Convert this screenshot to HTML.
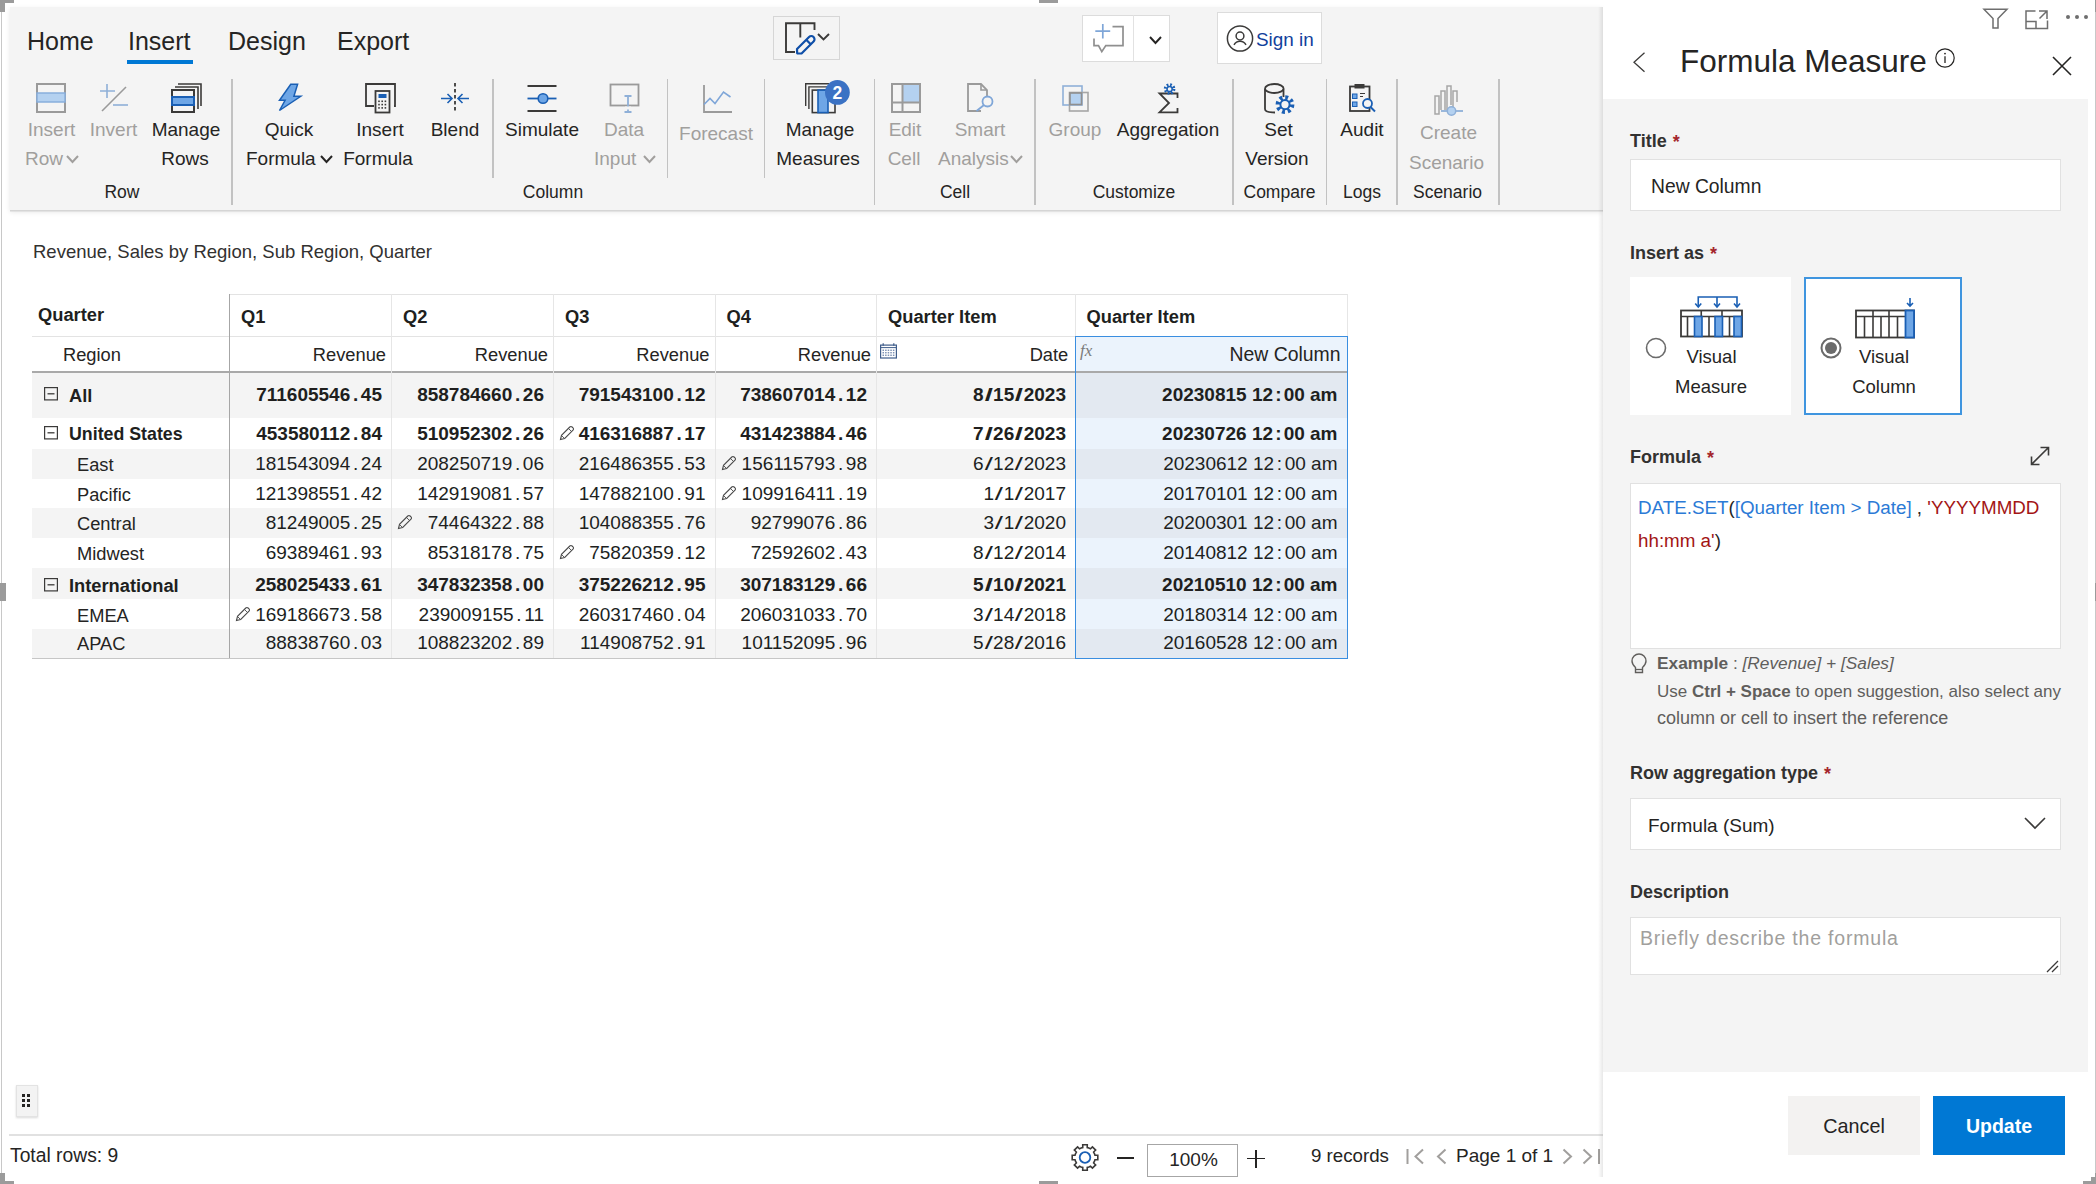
<!DOCTYPE html>
<html><head><meta charset="utf-8"><title>Formula Measure</title>
<style>
html,body{margin:0;padding:0;width:2096px;height:1184px;overflow:hidden;background:#fff;}
body{position:relative;font-family:"Liberation Sans",sans-serif;color:#252423;}
.t{position:absolute;white-space:pre;}
svg{position:absolute;}
</style></head><body>

<div style="position:absolute;left:1.00px;top:0.00px;width:1.00px;height:1184.00px;background:#c8c8c8;"></div>
<div style="position:absolute;left:2094.50px;top:0.00px;width:1.00px;height:1184.00px;background:#c8c8c8;"></div>
<div style="position:absolute;left:0.00px;top:0.00px;width:14.00px;height:3.00px;background:#9b9b9b;"></div>
<div style="position:absolute;left:0.00px;top:0.00px;width:5.00px;height:12.00px;background:#9b9b9b;"></div>
<div style="position:absolute;left:1039.00px;top:0.00px;width:19.00px;height:3.00px;background:#9b9b9b;"></div>
<div style="position:absolute;left:2094.50px;top:0.00px;width:1.50px;height:12.00px;background:#9b9b9b;"></div>
<div style="position:absolute;left:0.00px;top:583.00px;width:5.50px;height:18.00px;background:#9b9b9b;"></div>
<div style="position:absolute;left:2090.50px;top:583.00px;width:5.50px;height:18.00px;background:#9b9b9b;"></div>
<div style="position:absolute;left:0.00px;top:1173.00px;width:5.00px;height:11.00px;background:#9b9b9b;"></div>
<div style="position:absolute;left:0.00px;top:1181.00px;width:14.00px;height:3.00px;background:#9b9b9b;"></div>
<div style="position:absolute;left:1039.00px;top:1181.00px;width:19.00px;height:3.00px;background:#9b9b9b;"></div>
<div style="position:absolute;left:2091.00px;top:1173.00px;width:5.00px;height:11.00px;background:#9b9b9b;"></div>
<div style="position:absolute;left:2083.00px;top:1181.00px;width:13.00px;height:3.00px;background:#9b9b9b;"></div>
<div style="position:absolute;left:10.00px;top:7.00px;width:1593.00px;height:203.00px;background:#f4f4f4;box-shadow:0 1.5px 0 #d5d5d5, 0 2px 5px rgba(0,0,0,0.10);"></div>
<div class="t" style="top:26.96px;font-size:25.00px;line-height:28.75px;color:#252423;left:27.00px;">Home</div>
<div class="t" style="top:26.96px;font-size:25.00px;line-height:28.75px;color:#252423;left:128.00px;">Insert</div>
<div class="t" style="top:26.96px;font-size:25.00px;line-height:28.75px;color:#252423;left:228.00px;">Design</div>
<div class="t" style="top:26.96px;font-size:25.00px;line-height:28.75px;color:#252423;left:337.00px;">Export</div>
<div style="position:absolute;left:127.00px;top:60.00px;width:66.00px;height:4.00px;background:#0078d4;"></div>
<div class="t" style="top:119.49px;font-size:19.00px;line-height:21.85px;color:#a19f9d;left:-448.50px;width:1000px;text-align:center;">Insert</div>
<div class="t" style="top:148.49px;font-size:19.00px;line-height:21.85px;color:#a19f9d;left:25.00px;">Row</div>
<svg style="position:absolute;left:66.00px;top:155.00px;overflow:visible" width="13" height="8" viewBox="0 0 13 8" fill="none"><polyline points="1,1 6.5,7 12,1" stroke="#a19f9d" stroke-width="2" fill="none"/></svg>
<div class="t" style="top:119.49px;font-size:19.00px;line-height:21.85px;color:#a19f9d;left:-386.50px;width:1000px;text-align:center;">Invert</div>
<div class="t" style="top:119.49px;font-size:19.00px;line-height:21.85px;color:#252423;left:-314.00px;width:1000px;text-align:center;">Manage</div>
<div class="t" style="top:148.49px;font-size:19.00px;line-height:21.85px;color:#252423;left:-315.00px;width:1000px;text-align:center;">Rows</div>
<div class="t" style="top:181.87px;font-size:17.50px;line-height:20.12px;color:#252423;left:-378.00px;width:1000px;text-align:center;">Row</div>
<div class="t" style="top:119.49px;font-size:19.00px;line-height:21.85px;color:#252423;left:-211.00px;width:1000px;text-align:center;">Quick</div>
<div class="t" style="top:148.49px;font-size:19.00px;line-height:21.85px;color:#252423;left:246.00px;">Formula</div>
<svg style="position:absolute;left:320.00px;top:155.00px;overflow:visible" width="13" height="8" viewBox="0 0 13 8" fill="none"><polyline points="1,1 6.5,7 12,1" stroke="#252423" stroke-width="2" fill="none"/></svg>
<div class="t" style="top:119.49px;font-size:19.00px;line-height:21.85px;color:#252423;left:-120.00px;width:1000px;text-align:center;">Insert</div>
<div class="t" style="top:148.49px;font-size:19.00px;line-height:21.85px;color:#252423;left:-122.00px;width:1000px;text-align:center;">Formula</div>
<div class="t" style="top:119.49px;font-size:19.00px;line-height:21.85px;color:#252423;left:-45.00px;width:1000px;text-align:center;">Blend</div>
<div class="t" style="top:119.49px;font-size:19.00px;line-height:21.85px;color:#252423;left:42.00px;width:1000px;text-align:center;">Simulate</div>
<div class="t" style="top:119.49px;font-size:19.00px;line-height:21.85px;color:#a19f9d;left:124.00px;width:1000px;text-align:center;">Data</div>
<div class="t" style="top:148.49px;font-size:19.00px;line-height:21.85px;color:#a19f9d;left:594.00px;">Input</div>
<svg style="position:absolute;left:643.00px;top:155.00px;overflow:visible" width="13" height="8" viewBox="0 0 13 8" fill="none"><polyline points="1,1 6.5,7 12,1" stroke="#a19f9d" stroke-width="2" fill="none"/></svg>
<div class="t" style="top:181.87px;font-size:17.50px;line-height:20.12px;color:#252423;left:53.00px;width:1000px;text-align:center;">Column</div>
<div class="t" style="top:122.99px;font-size:19.00px;line-height:21.85px;color:#a19f9d;left:216.00px;width:1000px;text-align:center;">Forecast</div>
<div class="t" style="top:119.49px;font-size:19.00px;line-height:21.85px;color:#252423;left:320.00px;width:1000px;text-align:center;">Manage</div>
<div class="t" style="top:148.49px;font-size:19.00px;line-height:21.85px;color:#252423;left:318.00px;width:1000px;text-align:center;">Measures</div>
<div class="t" style="top:119.49px;font-size:19.00px;line-height:21.85px;color:#a19f9d;left:405.00px;width:1000px;text-align:center;">Edit</div>
<div class="t" style="top:148.49px;font-size:19.00px;line-height:21.85px;color:#a19f9d;left:404.00px;width:1000px;text-align:center;">Cell</div>
<div class="t" style="top:119.49px;font-size:19.00px;line-height:21.85px;color:#a19f9d;left:480.00px;width:1000px;text-align:center;">Smart</div>
<div class="t" style="top:148.49px;font-size:19.00px;line-height:21.85px;color:#a19f9d;left:938.00px;">Analysis</div>
<svg style="position:absolute;left:1010.00px;top:155.00px;overflow:visible" width="13" height="8" viewBox="0 0 13 8" fill="none"><polyline points="1,1 6.5,7 12,1" stroke="#a19f9d" stroke-width="2" fill="none"/></svg>
<div class="t" style="top:181.87px;font-size:17.50px;line-height:20.12px;color:#252423;left:455.00px;width:1000px;text-align:center;">Cell</div>
<div class="t" style="top:119.49px;font-size:19.00px;line-height:21.85px;color:#a19f9d;left:575.00px;width:1000px;text-align:center;">Group</div>
<div class="t" style="top:119.49px;font-size:19.00px;line-height:21.85px;color:#252423;left:668.00px;width:1000px;text-align:center;">Aggregation</div>
<div class="t" style="top:181.87px;font-size:17.50px;line-height:20.12px;color:#252423;left:634.00px;width:1000px;text-align:center;">Customize</div>
<div class="t" style="top:119.49px;font-size:19.00px;line-height:21.85px;color:#252423;left:778.50px;width:1000px;text-align:center;">Set</div>
<div class="t" style="top:148.49px;font-size:19.00px;line-height:21.85px;color:#252423;left:777.00px;width:1000px;text-align:center;">Version</div>
<div class="t" style="top:181.87px;font-size:17.50px;line-height:20.12px;color:#252423;left:779.50px;width:1000px;text-align:center;">Compare</div>
<div class="t" style="top:119.49px;font-size:19.00px;line-height:21.85px;color:#252423;left:862.00px;width:1000px;text-align:center;">Audit</div>
<div class="t" style="top:181.87px;font-size:17.50px;line-height:20.12px;color:#252423;left:862.00px;width:1000px;text-align:center;">Logs</div>
<div class="t" style="top:122.49px;font-size:19.00px;line-height:21.85px;color:#a19f9d;left:948.50px;width:1000px;text-align:center;">Create</div>
<div class="t" style="top:152.49px;font-size:19.00px;line-height:21.85px;color:#a19f9d;left:946.50px;width:1000px;text-align:center;">Scenario</div>
<div class="t" style="top:181.87px;font-size:17.50px;line-height:20.12px;color:#252423;left:947.50px;width:1000px;text-align:center;">Scenario</div>
<div style="position:absolute;left:231.25px;top:79.00px;width:1.50px;height:126.00px;background:#c2c2c2;"></div>
<div style="position:absolute;left:492.25px;top:79.00px;width:1.50px;height:99.00px;background:#c2c2c2;"></div>
<div style="position:absolute;left:666.75px;top:79.00px;width:1.50px;height:99.00px;background:#c2c2c2;"></div>
<div style="position:absolute;left:763.75px;top:79.00px;width:1.50px;height:99.00px;background:#c2c2c2;"></div>
<div style="position:absolute;left:873.75px;top:79.00px;width:1.50px;height:126.00px;background:#c2c2c2;"></div>
<div style="position:absolute;left:1034.25px;top:79.00px;width:1.50px;height:126.00px;background:#c2c2c2;"></div>
<div style="position:absolute;left:1232.25px;top:79.00px;width:1.50px;height:126.00px;background:#c2c2c2;"></div>
<div style="position:absolute;left:1325.75px;top:79.00px;width:1.50px;height:126.00px;background:#c2c2c2;"></div>
<div style="position:absolute;left:1396.25px;top:79.00px;width:1.50px;height:126.00px;background:#c2c2c2;"></div>
<div style="position:absolute;left:1498.25px;top:79.00px;width:1.50px;height:126.00px;background:#c2c2c2;"></div>
<svg style="position:absolute;left:36.00px;top:83.00px;overflow:visible" width="30" height="30" viewBox="0 0 30 30" fill="none"><rect x="1" y="1" width="28" height="28" stroke="#9a9a9a" stroke-width="2"/><rect x="1" y="10" width="28" height="9" fill="#b4d1f0" stroke="#88aedc" stroke-width="1.5"/></svg>
<svg style="position:absolute;left:100.00px;top:84.00px;overflow:visible" width="30" height="30" viewBox="0 0 30 30" fill="none"><path d="M7 0v14M0 7h15" stroke="#8fb0d8" stroke-width="1.6"/><path d="M26 3L2 27" stroke="#9a9a9a" stroke-width="1.6"/><path d="M13 21h15" stroke="#8fb0d8" stroke-width="1.6"/></svg>
<svg style="position:absolute;left:171.00px;top:83.00px;overflow:visible" width="31" height="30" viewBox="0 0 31 30" fill="none"><path d="M7 1h23v22" stroke="#3b3a39" stroke-width="1.6"/><path d="M4 4h23v22" stroke="#3b3a39" stroke-width="1.6"/><rect x="1" y="7" width="22" height="22" fill="#f4f4f4" stroke="#3b3a39" stroke-width="2"/><rect x="1" y="14" width="22" height="8" fill="#6ea6e6" stroke="#1a5fb4" stroke-width="2"/></svg>
<svg style="position:absolute;left:275.00px;top:83.00px;overflow:visible" width="30" height="30" viewBox="0 0 30 30" fill="none"><polygon points="15.75,1.25 22.6,1.25 18.9,13.25 25.75,13.25 4.5,27.5 10.1,17.25 4.5,17.25" fill="#6ea6e6" stroke="#1a5fb4" stroke-width="1.5" stroke-linejoin="miter"/></svg>
<svg style="position:absolute;left:365.00px;top:83.00px;overflow:visible" width="30" height="30" viewBox="0 0 30 30" fill="none"><path d="M9 23H1V1h29v22h-1" stroke="#3b3a39" stroke-width="1.8"/><rect x="10.5" y="8" width="14" height="21.5" fill="#f4f4f4" stroke="#3b3a39" stroke-width="1.8"/><rect x="13.5" y="11" width="8" height="4" fill="#1a5fb4"/><rect x="13.2" y="17.5" width="1.6" height="1.6" fill="#3b3a39"/><rect x="13.2" y="20.8" width="1.6" height="1.6" fill="#3b3a39"/><rect x="13.2" y="24.1" width="1.6" height="1.6" fill="#3b3a39"/><rect x="16.4" y="17.5" width="1.6" height="1.6" fill="#3b3a39"/><rect x="16.4" y="20.8" width="1.6" height="1.6" fill="#3b3a39"/><rect x="16.4" y="24.1" width="1.6" height="1.6" fill="#3b3a39"/><rect x="19.6" y="17.5" width="1.6" height="1.6" fill="#3b3a39"/><rect x="19.6" y="20.8" width="1.6" height="1.6" fill="#3b3a39"/><rect x="19.6" y="24.1" width="1.6" height="1.6" fill="#3b3a39"/></svg>
<svg style="position:absolute;left:440.00px;top:83.00px;overflow:visible" width="30" height="30" viewBox="0 0 30 30" fill="none"><path d="M15 0v30" stroke="#3b3a39" stroke-width="1.8" stroke-dasharray="3.5 2.5"/><path d="M1 15.5h11M7.5 11l4.5 4.5-4.5 4.5" stroke="#1a5fb4" stroke-width="1.6"/><path d="M29 15.5H18M22.5 11L18 15.5l4.5 4.5" stroke="#1a5fb4" stroke-width="1.6"/></svg>
<svg style="position:absolute;left:527.00px;top:83.00px;overflow:visible" width="30" height="30" viewBox="0 0 30 30" fill="none"><path d="M0.5 3h29M0.5 28h29" stroke="#3b3a39" stroke-width="1.8"/><path d="M0.5 15.5h29" stroke="#1a5fb4" stroke-width="1.8"/><circle cx="16" cy="15.5" r="4.8" fill="#6ea6e6" stroke="#1a5fb4" stroke-width="1.6"/></svg>
<svg style="position:absolute;left:609.00px;top:83.00px;overflow:visible" width="30" height="30" viewBox="0 0 30 30" fill="none"><rect x="1.5" y="1.5" width="28" height="21" stroke="#9a9a9a" stroke-width="1.8"/><path d="M19 13v16M15.5 13h7M15.5 29h7" stroke="#8fb0d8" stroke-width="1.8" fill="none"/><rect x="16" y="23.5" width="6" height="3" fill="#f4f4f4"/></svg>
<svg style="position:absolute;left:703.00px;top:84.00px;overflow:visible" width="30" height="30" viewBox="0 0 30 30" fill="none"><path d="M1 1v27h28" stroke="#9a9a9a" stroke-width="1.8"/><polyline points="1,20.5 7,14.5 12,19.5 20.5,8 27.5,13" stroke="#7fa6d8" stroke-width="1.6" fill="none"/></svg>
<svg style="position:absolute;left:805.00px;top:83.00px;overflow:visible" width="31" height="30" viewBox="0 0 31 30" fill="none"><path d="M0.7 23V0.7H24" stroke="#3b3a39" stroke-width="1.4"/><path d="M3.9 26V3.9H24" stroke="#3b3a39" stroke-width="1.4"/><rect x="7.3" y="7.1" width="22.7" height="22.5" fill="#f4f4f4" stroke="#3b3a39" stroke-width="1.6"/><rect x="13" y="7.1" width="10" height="22.5" fill="#6ea6e6" stroke="#1a5fb4" stroke-width="1.6"/></svg>
<svg style="position:absolute;left:825.00px;top:79.70px;overflow:visible" width="25" height="25" viewBox="0 0 25 25" fill="none"><circle cx="12.4" cy="12.4" r="12.4" fill="#3b72c4"/><text x="12.4" y="18.6" text-anchor="middle" font-family="Liberation Sans" font-weight="700" font-size="17.5" fill="#fff">2</text></svg>
<svg style="position:absolute;left:891.00px;top:83.00px;overflow:visible" width="30" height="30" viewBox="0 0 30 30" fill="none"><rect x="12" y="1" width="17" height="19" fill="#b4d1f0"/><rect x="1" y="1" width="28" height="28" stroke="#9a9a9a" stroke-width="2"/><path d="M11.5 1v28M1 19.5h28" stroke="#9a9a9a" stroke-width="2"/></svg>
<svg style="position:absolute;left:967.00px;top:83.00px;overflow:visible" width="30" height="30" viewBox="0 0 30 30" fill="none"><path d="M14 28H1V1h13l6 6v7" stroke="#9a9a9a" stroke-width="1.8" fill="none"/><path d="M14 1v6h6" stroke="#9a9a9a" stroke-width="1.6" fill="none"/><circle cx="20.5" cy="18.5" r="5" stroke="#7fa6d8" stroke-width="1.8"/><path d="M17 22L9.5 28" stroke="#7fa6d8" stroke-width="1.8"/></svg>
<svg style="position:absolute;left:1062.00px;top:85.00px;overflow:visible" width="28" height="28" viewBox="0 0 28 28" fill="none"><rect x="1" y="1" width="19" height="19" stroke="#8fb0d8" stroke-width="1.6"/><rect x="7.5" y="7.5" width="18.5" height="18.5" stroke="#a6a6a6" stroke-width="1.6"/><rect x="8" y="8" width="11.5" height="11.5" fill="#b4d1f0" stroke="#8f8f8f" stroke-width="1.6"/></svg>
<svg style="position:absolute;left:1155.00px;top:83.00px;overflow:visible" width="28" height="30" viewBox="0 0 28 30" fill="none"><path d="M22.5 15V10.5H4.5L14 20 4.5 29.3H22.5V25" stroke="#3b3a39" stroke-width="1.8" fill="none"/><circle cx="14.6" cy="6" r="4.2" stroke="#1a5fb4" stroke-width="3.2" stroke-dasharray="1.649 1.649"/><circle cx="14.6" cy="6" r="2.6" stroke="#1a5fb4" stroke-width="1.5"/></svg>
<svg style="position:absolute;left:1264.00px;top:83.00px;overflow:visible" width="30" height="30" viewBox="0 0 30 30" fill="none"><path d="M19.5 6v8M1 6v20c0 2.2 4 3.5 10 3.5" stroke="#3b3a39" stroke-width="1.8" fill="none"/><ellipse cx="10.3" cy="5.5" rx="9.3" ry="4.5" stroke="#3b3a39" stroke-width="1.8"/><circle cx="21" cy="21.6" r="7" fill="#f4f4f4"/><circle cx="21" cy="21.6" r="7" stroke="#1a5fb4" stroke-width="4.8" stroke-dasharray="2.749 2.749"/><circle cx="21" cy="21.6" r="4.6" stroke="#1a5fb4" stroke-width="2"/></svg>
<svg style="position:absolute;left:1349.00px;top:84.00px;overflow:visible" width="30" height="30" viewBox="0 0 30 30" fill="none"><rect x="1" y="2.5" width="19.5" height="24.5" stroke="#3b3a39" stroke-width="1.8"/><rect x="5.5" y="0" width="10" height="4.5" fill="#3b3a39"/><rect x="3.5" y="10" width="4.5" height="4.5" fill="#6ea6e6" stroke="#1a5fb4" stroke-width="1"/><rect x="3.5" y="18" width="4.5" height="4.5" fill="#6ea6e6" stroke="#1a5fb4" stroke-width="1"/><path d="M11 9.5h5M11 12.5h3" stroke="#3b3a39" stroke-width="1.2"/><circle cx="18.5" cy="19.5" r="4.5" fill="#f4f4f4" stroke="#1a5fb4" stroke-width="1.8"/><path d="M21.5 23l4.5 4.5" stroke="#1a5fb4" stroke-width="2"/></svg>
<svg style="position:absolute;left:1433.00px;top:85.00px;overflow:visible" width="30" height="30" viewBox="0 0 30 30" fill="none"><path d="M2 29V11h4v18zM8 25V6h4v19M14 25V1h4v19M20 25V6h4v11" stroke="#a6a6a6" stroke-width="1.5" fill="none"/><path d="M8 26h22" stroke="#8fb0d8" stroke-width="1.8"/><circle cx="18.5" cy="26" r="4.2" fill="#b4d1f0" stroke="#8fb0d8" stroke-width="1.5"/></svg>
<div style="position:absolute;left:773.00px;top:16.00px;width:67.00px;height:44.00px;background:#f4f4f4;border:1px solid #d6d6d6;box-sizing:border-box;"></div>
<svg style="position:absolute;left:785.00px;top:22.00px;overflow:visible" width="46" height="32" viewBox="0 0 46 32" fill="none"><path d="M10 30H1V1.2H29.5V8M15.3 1.2V15.5" stroke="#3b3a39" stroke-width="1.9" fill="none"/><g transform="translate(21,22.5) rotate(-45)"><path d="M-9.5 -3.2H7.5A3.2 3.2 0 0 1 7.5 3.2H-9.5L-12.5 0z" fill="#f4f4f4" stroke="#0f4fa8" stroke-width="2.2" stroke-linejoin="round"/><path d="M3.5 -3.2V3.2" stroke="#0f4fa8" stroke-width="2.2"/></g><polyline points="33,12 38.5,17.5 44,12" stroke="#3b3a39" stroke-width="1.9" fill="none"/></svg>
<div style="position:absolute;left:1082.00px;top:15.00px;width:88.00px;height:47.00px;background:#fff;border:1px solid #dcdcdc;box-sizing:border-box;"></div>
<div style="position:absolute;left:1132.50px;top:15.00px;width:1.00px;height:47.00px;background:#e2e2e2;"></div>
<svg style="position:absolute;left:1093.00px;top:24.00px;overflow:visible" width="32" height="30" viewBox="0 0 32 30" fill="none"><path d="M19.5 2.7H30V21.6H12.8L8.8 27.6L5.5 21.6H1V14.5" stroke="#8f8f8f" stroke-width="1.7" fill="none" stroke-linejoin="miter"/><path d="M9.8 0v14.6M2.3 7.2h14.9" stroke="#7fa6d8" stroke-width="1.7"/></svg>
<svg style="position:absolute;left:1148.50px;top:35.50px;overflow:visible" width="13" height="8" viewBox="0 0 13 8" fill="none"><polyline points="1,1 6.5,7 12,1" stroke="#252423" stroke-width="1.9" fill="none"/></svg>
<div style="position:absolute;left:1217.00px;top:12.00px;width:105.00px;height:52.00px;background:#fff;border:1px solid #dcdcdc;box-sizing:border-box;"></div>
<svg style="position:absolute;left:1226.00px;top:25.00px;overflow:visible" width="28" height="28" viewBox="0 0 28 28" fill="none"><circle cx="14" cy="13.5" r="12.6" stroke="#3b3a39" stroke-width="1.5"/><circle cx="14" cy="11" r="3.9" stroke="#3b3a39" stroke-width="1.5"/><path d="M8 19.8c1.5-2.6 3.6-3.6 6-3.6s4.5 1 6 3.6" stroke="#3b3a39" stroke-width="1.5" fill="none"/></svg>
<div class="t" style="top:28.58px;font-size:18.90px;line-height:21.73px;color:#113f9c;left:1256.00px;">Sign in</div>
<div class="t" style="top:240.95px;font-size:18.50px;line-height:21.27px;color:#323130;left:33.00px;">Revenue, Sales by Region, Sub Region, Quarter</div>
<div style="position:absolute;left:1075.00px;top:336.50px;width:272.50px;height:35.50px;background:#ebf3fc;"></div>
<div style="position:absolute;left:32.00px;top:373.00px;width:1043.00px;height:45.00px;background:#f4f4f4;"></div>
<div style="position:absolute;left:1075.00px;top:373.00px;width:272.50px;height:45.00px;background:#e3e9f1;"></div>
<div style="position:absolute;left:32.00px;top:418.00px;width:1043.00px;height:31.00px;background:#ffffff;"></div>
<div style="position:absolute;left:1075.00px;top:418.00px;width:272.50px;height:31.00px;background:#ebf3fc;"></div>
<div style="position:absolute;left:32.00px;top:449.00px;width:1043.00px;height:29.50px;background:#f4f4f4;"></div>
<div style="position:absolute;left:1075.00px;top:449.00px;width:272.50px;height:29.50px;background:#e3e9f1;"></div>
<div style="position:absolute;left:32.00px;top:478.50px;width:1043.00px;height:29.50px;background:#ffffff;"></div>
<div style="position:absolute;left:1075.00px;top:478.50px;width:272.50px;height:29.50px;background:#ebf3fc;"></div>
<div style="position:absolute;left:32.00px;top:508.00px;width:1043.00px;height:29.50px;background:#f4f4f4;"></div>
<div style="position:absolute;left:1075.00px;top:508.00px;width:272.50px;height:29.50px;background:#e3e9f1;"></div>
<div style="position:absolute;left:32.00px;top:537.50px;width:1043.00px;height:30.00px;background:#ffffff;"></div>
<div style="position:absolute;left:1075.00px;top:537.50px;width:272.50px;height:30.00px;background:#ebf3fc;"></div>
<div style="position:absolute;left:32.00px;top:567.50px;width:1043.00px;height:31.50px;background:#f4f4f4;"></div>
<div style="position:absolute;left:1075.00px;top:567.50px;width:272.50px;height:31.50px;background:#e3e9f1;"></div>
<div style="position:absolute;left:32.00px;top:599.00px;width:1043.00px;height:30.00px;background:#ffffff;"></div>
<div style="position:absolute;left:1075.00px;top:599.00px;width:272.50px;height:30.00px;background:#ebf3fc;"></div>
<div style="position:absolute;left:32.00px;top:629.00px;width:1043.00px;height:29.00px;background:#f4f4f4;"></div>
<div style="position:absolute;left:1075.00px;top:629.00px;width:272.50px;height:29.00px;background:#e3e9f1;"></div>
<div style="position:absolute;left:229.50px;top:294.00px;width:1118.00px;height:1.00px;background:#e3e3e3;"></div>
<div style="position:absolute;left:32.00px;top:336.00px;width:1315.50px;height:1.00px;background:#e3e3e3;"></div>
<div style="position:absolute;left:32.00px;top:371.00px;width:1315.50px;height:2.00px;background:#a9a9a9;"></div>
<div style="position:absolute;left:32.00px;top:657.50px;width:1043.00px;height:1.50px;background:#c6c6c6;"></div>
<div style="position:absolute;left:391.00px;top:294.00px;width:1.00px;height:364.00px;background:#e6e6e6;"></div>
<div style="position:absolute;left:553.00px;top:294.00px;width:1.00px;height:364.00px;background:#e6e6e6;"></div>
<div style="position:absolute;left:714.50px;top:294.00px;width:1.00px;height:364.00px;background:#e6e6e6;"></div>
<div style="position:absolute;left:876.00px;top:294.00px;width:1.00px;height:364.00px;background:#e6e6e6;"></div>
<div style="position:absolute;left:228.75px;top:294.00px;width:1.50px;height:364.00px;background:#a6a6a6;"></div>
<div style="position:absolute;left:1074.50px;top:294.00px;width:1.00px;height:42.00px;background:#e6e6e6;"></div>
<div style="position:absolute;left:1347.00px;top:294.00px;width:1.00px;height:42.00px;background:#e6e6e6;"></div>
<div style="position:absolute;left:1074.75px;top:336.00px;width:273.25px;height:322.50px;border:1.5px solid #3a8ee0;box-sizing:border-box;"></div>
<div class="t" style="top:303.74px;font-size:18.30px;line-height:21.04px;color:#201f1e;font-weight:700;left:38.00px;">Quarter</div>
<div class="t" style="top:305.94px;font-size:18.30px;line-height:21.04px;color:#201f1e;font-weight:700;left:241.00px;">Q1</div>
<div class="t" style="top:305.94px;font-size:18.30px;line-height:21.04px;color:#201f1e;font-weight:700;left:403.00px;">Q2</div>
<div class="t" style="top:305.94px;font-size:18.30px;line-height:21.04px;color:#201f1e;font-weight:700;left:565.00px;">Q3</div>
<div class="t" style="top:305.94px;font-size:18.30px;line-height:21.04px;color:#201f1e;font-weight:700;left:726.50px;">Q4</div>
<div class="t" style="top:305.94px;font-size:18.30px;line-height:21.04px;color:#201f1e;font-weight:700;left:888.00px;">Quarter Item</div>
<div class="t" style="top:305.94px;font-size:18.30px;line-height:21.04px;color:#201f1e;font-weight:700;left:1086.50px;">Quarter Item</div>
<div class="t" style="top:343.74px;font-size:18.30px;line-height:21.04px;color:#252423;left:63.00px;">Region</div>
<div class="t" style="top:344.14px;font-size:18.30px;line-height:21.04px;color:#252423;left:-614.00px;width:1000px;text-align:right;">Revenue</div>
<div class="t" style="top:344.14px;font-size:18.30px;line-height:21.04px;color:#252423;left:-452.00px;width:1000px;text-align:right;">Revenue</div>
<div class="t" style="top:344.14px;font-size:18.30px;line-height:21.04px;color:#252423;left:-290.50px;width:1000px;text-align:right;">Revenue</div>
<div class="t" style="top:344.14px;font-size:18.30px;line-height:21.04px;color:#252423;left:-129.00px;width:1000px;text-align:right;">Revenue</div>
<div class="t" style="top:344.14px;font-size:18.30px;line-height:21.04px;color:#252423;left:68.30px;width:1000px;text-align:right;">Date</div>
<div class="t" style="top:342.62px;font-size:19.40px;line-height:22.31px;color:#252423;left:340.50px;width:1000px;text-align:right;">New Column</div>
<svg style="position:absolute;left:880.00px;top:342.50px;overflow:visible" width="17" height="16" viewBox="0 0 17 16" fill="none"><rect x="0.6" y="2.1" width="15.8" height="12.9" stroke="#3f5d8a" stroke-width="1.2"/><path d="M0.6 4.6h15.8" stroke="#3f5d8a" stroke-width="1"/><path d="M3.2 0.2v2.6M13.8 0.2v2.6" stroke="#3f5d8a" stroke-width="1.2"/><rect x="2.5" y="6.6" width="1.5" height="1.3" fill="#6f86ab"/><rect x="2.5" y="9.1" width="1.5" height="1.3" fill="#6f86ab"/><rect x="2.5" y="11.6" width="1.5" height="1.3" fill="#6f86ab"/><rect x="5.1" y="6.6" width="1.5" height="1.3" fill="#6f86ab"/><rect x="5.1" y="9.1" width="1.5" height="1.3" fill="#6f86ab"/><rect x="5.1" y="11.6" width="1.5" height="1.3" fill="#6f86ab"/><rect x="7.7" y="6.6" width="1.5" height="1.3" fill="#6f86ab"/><rect x="7.7" y="9.1" width="1.5" height="1.3" fill="#6f86ab"/><rect x="7.7" y="11.6" width="1.5" height="1.3" fill="#6f86ab"/><rect x="10.3" y="6.6" width="1.5" height="1.3" fill="#6f86ab"/><rect x="10.3" y="9.1" width="1.5" height="1.3" fill="#6f86ab"/><rect x="10.3" y="11.6" width="1.5" height="1.3" fill="#6f86ab"/><rect x="12.9" y="6.6" width="1.5" height="1.3" fill="#6f86ab"/><rect x="12.9" y="9.1" width="1.5" height="1.3" fill="#6f86ab"/><rect x="12.9" y="11.6" width="1.5" height="1.3" fill="#6f86ab"/></svg>
<div class="t" style="top:341.33px;font-size:17.00px;line-height:19.55px;color:#7a7a7a;font-style:italic;left:1080.00px;font-family:'Liberation Serif',serif;">fx</div>
<svg style="position:absolute;left:44.00px;top:387.00px;overflow:visible" width="14" height="14" viewBox="0 0 14 14" fill="none"><rect x="0.6" y="0.6" width="12.8" height="12.3" stroke="#3b3a39" stroke-width="1.2"/><path d="M3.5 6.8h7" stroke="#3b3a39" stroke-width="1.3"/></svg>
<div class="t" style="top:384.64px;font-size:18.30px;line-height:21.04px;color:#201f1e;font-weight:700;left:69.00px;">All</div>
<div class="t" style="top:383.99px;font-size:19.00px;line-height:21.85px;color:#201f1e;font-weight:700;left:-618.00px;width:1000px;text-align:right;">711605546<span style="display:inline-block;width:10.6px;text-align:center">.</span>45</div>
<div class="t" style="top:383.99px;font-size:19.00px;line-height:21.85px;color:#201f1e;font-weight:700;left:-456.00px;width:1000px;text-align:right;">858784660<span style="display:inline-block;width:10.6px;text-align:center">.</span>26</div>
<div class="t" style="top:383.99px;font-size:19.00px;line-height:21.85px;color:#201f1e;font-weight:700;left:-294.50px;width:1000px;text-align:right;">791543100<span style="display:inline-block;width:10.6px;text-align:center">.</span>12</div>
<div class="t" style="top:383.99px;font-size:19.00px;line-height:21.85px;color:#201f1e;font-weight:700;left:-133.00px;width:1000px;text-align:right;">738607014<span style="display:inline-block;width:10.6px;text-align:center">.</span>12</div>
<div class="t" style="top:383.99px;font-size:19.00px;line-height:21.85px;color:#201f1e;font-weight:700;left:66.00px;width:1000px;text-align:right;">8<span style="display:inline-block;width:9.5px;text-align:center;transform:scaleX(1.55)">/</span>15<span style="display:inline-block;width:9.5px;text-align:center;transform:scaleX(1.55)">/</span>2023</div>
<div class="t" style="top:383.99px;font-size:19.00px;line-height:21.85px;color:#201f1e;font-weight:700;left:337.50px;width:1000px;text-align:right;">20230815 12<span style="display:inline-block;width:10.6px;text-align:center">:</span>00 am</div>
<svg style="position:absolute;left:44.00px;top:426.30px;overflow:visible" width="14" height="14" viewBox="0 0 14 14" fill="none"><rect x="0.6" y="0.6" width="12.8" height="12.3" stroke="#3b3a39" stroke-width="1.2"/><path d="M3.5 6.8h7" stroke="#3b3a39" stroke-width="1.3"/></svg>
<div class="t" style="top:424.40px;font-size:17.80px;line-height:20.47px;color:#201f1e;font-weight:700;left:69.00px;">United States</div>
<div class="t" style="top:423.29px;font-size:19.00px;line-height:21.85px;color:#201f1e;font-weight:700;left:-618.00px;width:1000px;text-align:right;">453580112<span style="display:inline-block;width:10.6px;text-align:center">.</span>84</div>
<div class="t" style="top:423.29px;font-size:19.00px;line-height:21.85px;color:#201f1e;font-weight:700;left:-456.00px;width:1000px;text-align:right;">510952302<span style="display:inline-block;width:10.6px;text-align:center">.</span>26</div>
<div class="t" style="top:423.29px;font-size:19.00px;line-height:21.85px;color:#201f1e;font-weight:700;left:-294.50px;width:1000px;text-align:right;">416316887<span style="display:inline-block;width:10.6px;text-align:center">.</span>17</div>
<div class="t" style="top:423.29px;font-size:19.00px;line-height:21.85px;color:#201f1e;font-weight:700;left:-133.00px;width:1000px;text-align:right;">431423884<span style="display:inline-block;width:10.6px;text-align:center">.</span>46</div>
<svg style="position:absolute;left:559.00px;top:425.80px;overflow:visible" width="15" height="15" viewBox="0 0 15 15" fill="none"><path d="M1.5 13.5l1-4.2L10.8 1a1.6 1.6 0 0 1 2.3 0l0.9 0.9a1.6 1.6 0 0 1 0 2.3L5.7 12.5z" stroke="#4a4a4a" stroke-width="1.1" fill="none"/><path d="M9.5 2.5l3 3M2.5 9.5l3 3" stroke="#4a4a4a" stroke-width="0.9"/></svg>
<div class="t" style="top:423.29px;font-size:19.00px;line-height:21.85px;color:#201f1e;font-weight:700;left:66.00px;width:1000px;text-align:right;">7<span style="display:inline-block;width:9.5px;text-align:center;transform:scaleX(1.55)">/</span>26<span style="display:inline-block;width:9.5px;text-align:center;transform:scaleX(1.55)">/</span>2023</div>
<div class="t" style="top:423.29px;font-size:19.00px;line-height:21.85px;color:#201f1e;font-weight:700;left:337.50px;width:1000px;text-align:right;">20230726 12<span style="display:inline-block;width:10.6px;text-align:center">:</span>00 am</div>
<div class="t" style="top:453.94px;font-size:18.30px;line-height:21.04px;color:#252423;left:77.00px;">East</div>
<div class="t" style="top:453.29px;font-size:19.00px;line-height:21.85px;color:#201f1e;left:-618.00px;width:1000px;text-align:right;">181543094<span style="display:inline-block;width:10.6px;text-align:center">.</span>24</div>
<div class="t" style="top:453.29px;font-size:19.00px;line-height:21.85px;color:#201f1e;left:-456.00px;width:1000px;text-align:right;">208250719<span style="display:inline-block;width:10.6px;text-align:center">.</span>06</div>
<div class="t" style="top:453.29px;font-size:19.00px;line-height:21.85px;color:#201f1e;left:-294.50px;width:1000px;text-align:right;">216486355<span style="display:inline-block;width:10.6px;text-align:center">.</span>53</div>
<div class="t" style="top:453.29px;font-size:19.00px;line-height:21.85px;color:#201f1e;left:-133.00px;width:1000px;text-align:right;">156115793<span style="display:inline-block;width:10.6px;text-align:center">.</span>98</div>
<svg style="position:absolute;left:720.50px;top:455.80px;overflow:visible" width="15" height="15" viewBox="0 0 15 15" fill="none"><path d="M1.5 13.5l1-4.2L10.8 1a1.6 1.6 0 0 1 2.3 0l0.9 0.9a1.6 1.6 0 0 1 0 2.3L5.7 12.5z" stroke="#4a4a4a" stroke-width="1.1" fill="none"/><path d="M9.5 2.5l3 3M2.5 9.5l3 3" stroke="#4a4a4a" stroke-width="0.9"/></svg>
<div class="t" style="top:453.29px;font-size:19.00px;line-height:21.85px;color:#201f1e;left:66.00px;width:1000px;text-align:right;">6<span style="display:inline-block;width:9.5px;text-align:center;transform:scaleX(1.55)">/</span>12<span style="display:inline-block;width:9.5px;text-align:center;transform:scaleX(1.55)">/</span>2023</div>
<div class="t" style="top:453.29px;font-size:19.00px;line-height:21.85px;color:#201f1e;left:337.50px;width:1000px;text-align:right;">20230612 12<span style="display:inline-block;width:10.6px;text-align:center">:</span>00 am</div>
<div class="t" style="top:483.74px;font-size:18.30px;line-height:21.04px;color:#252423;left:77.00px;">Pacific</div>
<div class="t" style="top:483.09px;font-size:19.00px;line-height:21.85px;color:#201f1e;left:-618.00px;width:1000px;text-align:right;">121398551<span style="display:inline-block;width:10.6px;text-align:center">.</span>42</div>
<div class="t" style="top:483.09px;font-size:19.00px;line-height:21.85px;color:#201f1e;left:-456.00px;width:1000px;text-align:right;">142919081<span style="display:inline-block;width:10.6px;text-align:center">.</span>57</div>
<div class="t" style="top:483.09px;font-size:19.00px;line-height:21.85px;color:#201f1e;left:-294.50px;width:1000px;text-align:right;">147882100<span style="display:inline-block;width:10.6px;text-align:center">.</span>91</div>
<div class="t" style="top:483.09px;font-size:19.00px;line-height:21.85px;color:#201f1e;left:-133.00px;width:1000px;text-align:right;">109916411<span style="display:inline-block;width:10.6px;text-align:center">.</span>19</div>
<svg style="position:absolute;left:720.50px;top:485.60px;overflow:visible" width="15" height="15" viewBox="0 0 15 15" fill="none"><path d="M1.5 13.5l1-4.2L10.8 1a1.6 1.6 0 0 1 2.3 0l0.9 0.9a1.6 1.6 0 0 1 0 2.3L5.7 12.5z" stroke="#4a4a4a" stroke-width="1.1" fill="none"/><path d="M9.5 2.5l3 3M2.5 9.5l3 3" stroke="#4a4a4a" stroke-width="0.9"/></svg>
<div class="t" style="top:483.09px;font-size:19.00px;line-height:21.85px;color:#201f1e;left:66.00px;width:1000px;text-align:right;">1<span style="display:inline-block;width:9.5px;text-align:center;transform:scaleX(1.55)">/</span>1<span style="display:inline-block;width:9.5px;text-align:center;transform:scaleX(1.55)">/</span>2017</div>
<div class="t" style="top:483.09px;font-size:19.00px;line-height:21.85px;color:#201f1e;left:337.50px;width:1000px;text-align:right;">20170101 12<span style="display:inline-block;width:10.6px;text-align:center">:</span>00 am</div>
<div class="t" style="top:513.14px;font-size:18.30px;line-height:21.04px;color:#252423;left:77.00px;">Central</div>
<div class="t" style="top:512.49px;font-size:19.00px;line-height:21.85px;color:#201f1e;left:-618.00px;width:1000px;text-align:right;">81249005<span style="display:inline-block;width:10.6px;text-align:center">.</span>25</div>
<div class="t" style="top:512.49px;font-size:19.00px;line-height:21.85px;color:#201f1e;left:-456.00px;width:1000px;text-align:right;">74464322<span style="display:inline-block;width:10.6px;text-align:center">.</span>88</div>
<div class="t" style="top:512.49px;font-size:19.00px;line-height:21.85px;color:#201f1e;left:-294.50px;width:1000px;text-align:right;">104088355<span style="display:inline-block;width:10.6px;text-align:center">.</span>76</div>
<div class="t" style="top:512.49px;font-size:19.00px;line-height:21.85px;color:#201f1e;left:-133.00px;width:1000px;text-align:right;">92799076<span style="display:inline-block;width:10.6px;text-align:center">.</span>86</div>
<svg style="position:absolute;left:397.00px;top:515.00px;overflow:visible" width="15" height="15" viewBox="0 0 15 15" fill="none"><path d="M1.5 13.5l1-4.2L10.8 1a1.6 1.6 0 0 1 2.3 0l0.9 0.9a1.6 1.6 0 0 1 0 2.3L5.7 12.5z" stroke="#4a4a4a" stroke-width="1.1" fill="none"/><path d="M9.5 2.5l3 3M2.5 9.5l3 3" stroke="#4a4a4a" stroke-width="0.9"/></svg>
<div class="t" style="top:512.49px;font-size:19.00px;line-height:21.85px;color:#201f1e;left:66.00px;width:1000px;text-align:right;">3<span style="display:inline-block;width:9.5px;text-align:center;transform:scaleX(1.55)">/</span>1<span style="display:inline-block;width:9.5px;text-align:center;transform:scaleX(1.55)">/</span>2020</div>
<div class="t" style="top:512.49px;font-size:19.00px;line-height:21.85px;color:#201f1e;left:337.50px;width:1000px;text-align:right;">20200301 12<span style="display:inline-block;width:10.6px;text-align:center">:</span>00 am</div>
<div class="t" style="top:542.84px;font-size:18.30px;line-height:21.04px;color:#252423;left:77.00px;">Midwest</div>
<div class="t" style="top:542.19px;font-size:19.00px;line-height:21.85px;color:#201f1e;left:-618.00px;width:1000px;text-align:right;">69389461<span style="display:inline-block;width:10.6px;text-align:center">.</span>93</div>
<div class="t" style="top:542.19px;font-size:19.00px;line-height:21.85px;color:#201f1e;left:-456.00px;width:1000px;text-align:right;">85318178<span style="display:inline-block;width:10.6px;text-align:center">.</span>75</div>
<div class="t" style="top:542.19px;font-size:19.00px;line-height:21.85px;color:#201f1e;left:-294.50px;width:1000px;text-align:right;">75820359<span style="display:inline-block;width:10.6px;text-align:center">.</span>12</div>
<div class="t" style="top:542.19px;font-size:19.00px;line-height:21.85px;color:#201f1e;left:-133.00px;width:1000px;text-align:right;">72592602<span style="display:inline-block;width:10.6px;text-align:center">.</span>43</div>
<svg style="position:absolute;left:559.00px;top:544.70px;overflow:visible" width="15" height="15" viewBox="0 0 15 15" fill="none"><path d="M1.5 13.5l1-4.2L10.8 1a1.6 1.6 0 0 1 2.3 0l0.9 0.9a1.6 1.6 0 0 1 0 2.3L5.7 12.5z" stroke="#4a4a4a" stroke-width="1.1" fill="none"/><path d="M9.5 2.5l3 3M2.5 9.5l3 3" stroke="#4a4a4a" stroke-width="0.9"/></svg>
<div class="t" style="top:542.19px;font-size:19.00px;line-height:21.85px;color:#201f1e;left:66.00px;width:1000px;text-align:right;">8<span style="display:inline-block;width:9.5px;text-align:center;transform:scaleX(1.55)">/</span>12<span style="display:inline-block;width:9.5px;text-align:center;transform:scaleX(1.55)">/</span>2014</div>
<div class="t" style="top:542.19px;font-size:19.00px;line-height:21.85px;color:#201f1e;left:337.50px;width:1000px;text-align:right;">20140812 12<span style="display:inline-block;width:10.6px;text-align:center">:</span>00 am</div>
<svg style="position:absolute;left:44.00px;top:577.50px;overflow:visible" width="14" height="14" viewBox="0 0 14 14" fill="none"><rect x="0.6" y="0.6" width="12.8" height="12.3" stroke="#3b3a39" stroke-width="1.2"/><path d="M3.5 6.8h7" stroke="#3b3a39" stroke-width="1.3"/></svg>
<div class="t" style="top:575.14px;font-size:18.30px;line-height:21.04px;color:#201f1e;font-weight:700;left:69.00px;">International</div>
<div class="t" style="top:574.49px;font-size:19.00px;line-height:21.85px;color:#201f1e;font-weight:700;left:-618.00px;width:1000px;text-align:right;">258025433<span style="display:inline-block;width:10.6px;text-align:center">.</span>61</div>
<div class="t" style="top:574.49px;font-size:19.00px;line-height:21.85px;color:#201f1e;font-weight:700;left:-456.00px;width:1000px;text-align:right;">347832358<span style="display:inline-block;width:10.6px;text-align:center">.</span>00</div>
<div class="t" style="top:574.49px;font-size:19.00px;line-height:21.85px;color:#201f1e;font-weight:700;left:-294.50px;width:1000px;text-align:right;">375226212<span style="display:inline-block;width:10.6px;text-align:center">.</span>95</div>
<div class="t" style="top:574.49px;font-size:19.00px;line-height:21.85px;color:#201f1e;font-weight:700;left:-133.00px;width:1000px;text-align:right;">307183129<span style="display:inline-block;width:10.6px;text-align:center">.</span>66</div>
<div class="t" style="top:574.49px;font-size:19.00px;line-height:21.85px;color:#201f1e;font-weight:700;left:66.00px;width:1000px;text-align:right;">5<span style="display:inline-block;width:9.5px;text-align:center;transform:scaleX(1.55)">/</span>10<span style="display:inline-block;width:9.5px;text-align:center;transform:scaleX(1.55)">/</span>2021</div>
<div class="t" style="top:574.49px;font-size:19.00px;line-height:21.85px;color:#201f1e;font-weight:700;left:337.50px;width:1000px;text-align:right;">20210510 12<span style="display:inline-block;width:10.6px;text-align:center">:</span>00 am</div>
<div class="t" style="top:604.94px;font-size:18.30px;line-height:21.04px;color:#252423;left:77.00px;">EMEA</div>
<div class="t" style="top:604.29px;font-size:19.00px;line-height:21.85px;color:#201f1e;left:-618.00px;width:1000px;text-align:right;">169186673<span style="display:inline-block;width:10.6px;text-align:center">.</span>58</div>
<div class="t" style="top:604.29px;font-size:19.00px;line-height:21.85px;color:#201f1e;left:-456.00px;width:1000px;text-align:right;">239009155<span style="display:inline-block;width:10.6px;text-align:center">.</span>11</div>
<div class="t" style="top:604.29px;font-size:19.00px;line-height:21.85px;color:#201f1e;left:-294.50px;width:1000px;text-align:right;">260317460<span style="display:inline-block;width:10.6px;text-align:center">.</span>04</div>
<div class="t" style="top:604.29px;font-size:19.00px;line-height:21.85px;color:#201f1e;left:-133.00px;width:1000px;text-align:right;">206031033<span style="display:inline-block;width:10.6px;text-align:center">.</span>70</div>
<svg style="position:absolute;left:235.00px;top:606.80px;overflow:visible" width="15" height="15" viewBox="0 0 15 15" fill="none"><path d="M1.5 13.5l1-4.2L10.8 1a1.6 1.6 0 0 1 2.3 0l0.9 0.9a1.6 1.6 0 0 1 0 2.3L5.7 12.5z" stroke="#4a4a4a" stroke-width="1.1" fill="none"/><path d="M9.5 2.5l3 3M2.5 9.5l3 3" stroke="#4a4a4a" stroke-width="0.9"/></svg>
<div class="t" style="top:604.29px;font-size:19.00px;line-height:21.85px;color:#201f1e;left:66.00px;width:1000px;text-align:right;">3<span style="display:inline-block;width:9.5px;text-align:center;transform:scaleX(1.55)">/</span>14<span style="display:inline-block;width:9.5px;text-align:center;transform:scaleX(1.55)">/</span>2018</div>
<div class="t" style="top:604.29px;font-size:19.00px;line-height:21.85px;color:#201f1e;left:337.50px;width:1000px;text-align:right;">20180314 12<span style="display:inline-block;width:10.6px;text-align:center">:</span>00 am</div>
<div class="t" style="top:633.14px;font-size:18.30px;line-height:21.04px;color:#252423;left:77.00px;">APAC</div>
<div class="t" style="top:632.49px;font-size:19.00px;line-height:21.85px;color:#201f1e;left:-618.00px;width:1000px;text-align:right;">88838760<span style="display:inline-block;width:10.6px;text-align:center">.</span>03</div>
<div class="t" style="top:632.49px;font-size:19.00px;line-height:21.85px;color:#201f1e;left:-456.00px;width:1000px;text-align:right;">108823202<span style="display:inline-block;width:10.6px;text-align:center">.</span>89</div>
<div class="t" style="top:632.49px;font-size:19.00px;line-height:21.85px;color:#201f1e;left:-294.50px;width:1000px;text-align:right;">114908752<span style="display:inline-block;width:10.6px;text-align:center">.</span>91</div>
<div class="t" style="top:632.49px;font-size:19.00px;line-height:21.85px;color:#201f1e;left:-133.00px;width:1000px;text-align:right;">101152095<span style="display:inline-block;width:10.6px;text-align:center">.</span>96</div>
<div class="t" style="top:632.49px;font-size:19.00px;line-height:21.85px;color:#201f1e;left:66.00px;width:1000px;text-align:right;">5<span style="display:inline-block;width:9.5px;text-align:center;transform:scaleX(1.55)">/</span>28<span style="display:inline-block;width:9.5px;text-align:center;transform:scaleX(1.55)">/</span>2016</div>
<div class="t" style="top:632.49px;font-size:19.00px;line-height:21.85px;color:#201f1e;left:337.50px;width:1000px;text-align:right;">20160528 12<span style="display:inline-block;width:10.6px;text-align:center">:</span>00 am</div>
<div style="position:absolute;left:15.50px;top:1085.00px;width:22.00px;height:31.50px;background:#f3f3f3;border:1px solid #e3e3e3;box-sizing:border-box;box-shadow:0 1px 2px rgba(0,0,0,0.15);"></div>
<div style="position:absolute;left:22.20px;top:1094.00px;width:2.80px;height:2.60px;background:#252423;"></div>
<div style="position:absolute;left:22.20px;top:1099.20px;width:2.80px;height:2.60px;background:#252423;"></div>
<div style="position:absolute;left:22.20px;top:1104.40px;width:2.80px;height:2.60px;background:#252423;"></div>
<div style="position:absolute;left:27.20px;top:1094.00px;width:2.80px;height:2.60px;background:#252423;"></div>
<div style="position:absolute;left:27.20px;top:1099.20px;width:2.80px;height:2.60px;background:#252423;"></div>
<div style="position:absolute;left:27.20px;top:1104.40px;width:2.80px;height:2.60px;background:#252423;"></div>
<div style="position:absolute;left:9.00px;top:1134.00px;width:1594.00px;height:1.50px;background:#e1e1e1;"></div>
<div class="t" style="top:1145.22px;font-size:19.30px;line-height:22.20px;color:#252423;left:10.00px;">Total rows: 9</div>
<svg style="position:absolute;left:1071.00px;top:1144.00px;overflow:visible" width="28" height="28" viewBox="0 0 28 28" fill="none"><path d="M23.42 9.60 L23.95 11.27 L26.80 11.22 L26.80 15.78 L23.95 15.73 L23.42 17.40 L22.61 18.96 L24.66 20.94 L21.44 24.16 L19.46 22.11 L17.90 22.92 L16.23 23.45 L16.28 26.30 L11.72 26.30 L11.77 23.45 L10.10 22.92 L8.54 22.11 L6.56 24.16 L3.34 20.94 L5.39 18.96 L4.58 17.40 L4.05 15.73 L1.20 15.78 L1.20 11.22 L4.05 11.27 L4.58 9.60 L5.39 8.04 L3.34 6.06 L6.56 2.84 L8.54 4.89 L10.10 4.08 L11.77 3.55 L11.72 0.70 L16.28 0.70 L16.23 3.55 L17.90 4.08 L19.46 4.89 L21.44 2.84 L24.66 6.06 L22.61 8.04Z" stroke="#3b3a39" stroke-width="1.6" fill="#fff"/><circle cx="14" cy="13.5" r="5.3" stroke="#1a5fb4" stroke-width="1.8"/></svg>
<div style="position:absolute;left:1117.00px;top:1157.30px;width:16.50px;height:1.60px;background:#252423;"></div>
<div style="position:absolute;left:1147.00px;top:1144.00px;width:91.00px;height:32.50px;background:#fff;border:1px solid #a6a6a6;box-sizing:border-box;"></div>
<div class="t" style="top:1149.49px;font-size:19.00px;line-height:21.85px;color:#252423;left:693.50px;width:1000px;text-align:center;">100%</div>
<div style="position:absolute;left:1247.00px;top:1157.50px;width:18.00px;height:1.70px;background:#252423;"></div>
<div style="position:absolute;left:1255.20px;top:1149.50px;width:1.70px;height:18.00px;background:#252423;"></div>
<div class="t" style="top:1145.27px;font-size:18.70px;line-height:21.50px;color:#252423;left:1311.00px;">9 records</div>
<svg style="position:absolute;left:1406.00px;top:1148.00px;overflow:visible" width="20" height="17" viewBox="0 0 20 17" fill="none"><path d="M1.5 1v15" stroke="#a19f9d" stroke-width="2"/><polyline points="17,1.5 9.5,8.5 17,15.5" stroke="#a19f9d" stroke-width="2" fill="none"/></svg>
<svg style="position:absolute;left:1435.00px;top:1148.00px;overflow:visible" width="12" height="17" viewBox="0 0 12 17" fill="none"><polyline points="10.5,1.5 3,8.5 10.5,15.5" stroke="#a19f9d" stroke-width="2" fill="none"/></svg>
<div class="t" style="top:1144.99px;font-size:19.00px;line-height:21.85px;color:#252423;left:1456.00px;">Page 1 of 1</div>
<svg style="position:absolute;left:1562.00px;top:1148.00px;overflow:visible" width="12" height="17" viewBox="0 0 12 17" fill="none"><polyline points="1.5,1.5 9,8.5 1.5,15.5" stroke="#a19f9d" stroke-width="2" fill="none"/></svg>
<svg style="position:absolute;left:1582.00px;top:1148.00px;overflow:visible" width="20" height="17" viewBox="0 0 20 17" fill="none"><polyline points="1.5,1.5 9,8.5 1.5,15.5" stroke="#a19f9d" stroke-width="2" fill="none"/><path d="M17 1v15" stroke="#a19f9d" stroke-width="2"/></svg>
<div style="position:absolute;left:1598.00px;top:7.00px;width:5.00px;height:1170.00px;background:linear-gradient(to right, rgba(0,0,0,0), rgba(0,0,0,0.09));"></div>
<div style="position:absolute;left:1603.00px;top:7.00px;width:491.50px;height:1170.00px;background:#ffffff;"></div>
<div style="position:absolute;left:1603.00px;top:99.00px;width:485.00px;height:973.00px;background:#f4f4f4;"></div>
<svg style="position:absolute;left:1983.00px;top:8.00px;overflow:visible" width="25" height="21" viewBox="0 0 25 21" fill="none"><path d="M1 1.2h23L15 10.5v9.5h-5V10.5z" stroke="#6e6e6e" stroke-width="1.5" fill="none" stroke-linejoin="miter"/></svg>
<svg style="position:absolute;left:2025.00px;top:10.00px;overflow:visible" width="23" height="19" viewBox="0 0 23 19" fill="none"><path d="M10.5 1H1v17.5h21.5V10.5" stroke="#6e6e6e" stroke-width="1.5" fill="none"/><path d="M1 11.5h10v7" stroke="#6e6e6e" stroke-width="1.5" fill="none"/><path d="M14 1h8v8M22 1l-7.5 7.5" stroke="#6e6e6e" stroke-width="1.5" fill="none"/></svg>
<div style="position:absolute;left:2066px;top:15px;width:4px;height:4px;border-radius:2px;background:#6e6e6e"></div>
<div style="position:absolute;left:2075px;top:15px;width:4px;height:4px;border-radius:2px;background:#6e6e6e"></div>
<div style="position:absolute;left:2084px;top:15px;width:4px;height:4px;border-radius:2px;background:#6e6e6e"></div>
<svg style="position:absolute;left:1632.00px;top:52.00px;overflow:visible" width="14" height="21" viewBox="0 0 14 21" fill="none"><polyline points="12.5,0.8 2,10.3 12.5,19.8" stroke="#3b3a39" stroke-width="1.3" fill="none"/></svg>
<div class="t" style="top:43.27px;font-size:31.50px;line-height:36.22px;color:#252423;left:1680.00px;">Formula Measure</div>
<svg style="position:absolute;left:1935.00px;top:48.00px;overflow:visible" width="20" height="20" viewBox="0 0 20 20" fill="none"><circle cx="10" cy="10" r="9.2" stroke="#252423" stroke-width="1.2"/><path d="M10 8.3v6.7" stroke="#252423" stroke-width="1.3"/><circle cx="10" cy="5.6" r="0.9" fill="#252423"/></svg>
<svg style="position:absolute;left:2052.00px;top:56.00px;overflow:visible" width="20" height="20" viewBox="0 0 20 20" fill="none"><path d="M1 1l18 18M19 1L1 19" stroke="#252423" stroke-width="1.6"/></svg>
<div class="t" style="top:131.41px;font-size:18.00px;line-height:20.70px;color:#323130;font-weight:700;left:1630.00px;">Title</div>
<div class="t" style="top:132.41px;font-size:18.00px;line-height:20.70px;color:#a4262c;font-weight:700;left:1672.67px;">*</div>
<div style="position:absolute;left:1630.00px;top:159.00px;width:431.00px;height:52.00px;background:#fff;border:1px solid #e1e1e1;box-sizing:border-box;"></div>
<div class="t" style="top:176.22px;font-size:19.30px;line-height:22.20px;color:#252423;left:1651.00px;">New Column</div>
<div class="t" style="top:243.41px;font-size:18.00px;line-height:20.70px;color:#323130;font-weight:700;left:1630.00px;">Insert as</div>
<div class="t" style="top:244.41px;font-size:18.00px;line-height:20.70px;color:#a4262c;font-weight:700;left:1710.03px;">*</div>
<div style="position:absolute;left:1630.00px;top:277.00px;width:161.00px;height:138.00px;background:#fff;"></div>
<div style="position:absolute;left:1804.00px;top:277.00px;width:158.00px;height:138.00px;background:#fff;border:2px solid #3f95df;box-sizing:border-box;"></div>
<svg style="position:absolute;left:1645.00px;top:337.00px;overflow:visible" width="22" height="22" viewBox="0 0 22 22" fill="none"><circle cx="11" cy="11" r="9.5" stroke="#6b6b6b" stroke-width="1.6" fill="#fff"/></svg>
<svg style="position:absolute;left:1819.50px;top:337.00px;overflow:visible" width="22" height="22" viewBox="0 0 22 22" fill="none"><circle cx="11" cy="11" r="9.5" stroke="#6b6b6b" stroke-width="2" fill="#fff"/><circle cx="11" cy="11" r="6" fill="#6b6b6b"/></svg>
<svg style="position:absolute;left:1680.00px;top:296.00px;overflow:visible" width="63" height="42" viewBox="0 0 63 42" fill="none"><path d="M18.25 11V1h38.75v10M37 1v10" stroke="#1a5fb4" stroke-width="1.6" fill="none"/><path d="M15.25 7.5l3 3.5 3-3.5" stroke="#1a5fb4" stroke-width="1.6" fill="none"/><path d="M34 7.5l3 3.5 3-3.5" stroke="#1a5fb4" stroke-width="1.6" fill="none"/><path d="M54 7.5l3 3.5 3-3.5" stroke="#1a5fb4" stroke-width="1.6" fill="none"/><rect x="1" y="14.5" width="61" height="26" stroke="#3b3a39" stroke-width="1.8" fill="#fff"/><path d="M1 20.5h61M21.25 14.5v26M42 14.5v26M7.5 20.5v20M29 20.5v20M49.5 20.5v20" stroke="#3b3a39" stroke-width="1.6"/><rect x="14.5" y="20.5" width="7.5" height="20" fill="#6ea6e6" stroke="#1a5fb4" stroke-width="1.6"/><rect x="35" y="20.5" width="7.5" height="20" fill="#6ea6e6" stroke="#1a5fb4" stroke-width="1.6"/><rect x="54" y="20.5" width="7.5" height="20" fill="#6ea6e6" stroke="#1a5fb4" stroke-width="1.6"/></svg>
<svg style="position:absolute;left:1855.00px;top:298.00px;overflow:visible" width="60" height="41" viewBox="0 0 60 41" fill="none"><path d="M55 0v8M52 5l3 3 3-3" stroke="#1a5fb4" stroke-width="1.6" fill="none"/><rect x="1" y="12.5" width="58" height="27" stroke="#3b3a39" stroke-width="1.8" fill="#fff"/><path d="M1 18.5h50M18 12.5v27M34 12.5v27M9.5 18.5v21M26 18.5v21M42.5 18.5v21" stroke="#3b3a39" stroke-width="1.6"/><rect x="50.5" y="12.5" width="8.5" height="27" fill="#6ea6e6" stroke="#1a5fb4" stroke-width="1.8"/></svg>
<div class="t" style="top:345.95px;font-size:18.50px;line-height:21.27px;color:#252423;left:1211.50px;width:1000px;text-align:center;">Visual</div>
<div class="t" style="top:375.95px;font-size:18.50px;line-height:21.27px;color:#252423;left:1211.00px;width:1000px;text-align:center;">Measure</div>
<div class="t" style="top:345.95px;font-size:18.50px;line-height:21.27px;color:#252423;left:1384.00px;width:1000px;text-align:center;">Visual</div>
<div class="t" style="top:375.95px;font-size:18.50px;line-height:21.27px;color:#252423;left:1384.00px;width:1000px;text-align:center;">Column</div>
<div class="t" style="top:447.41px;font-size:18.00px;line-height:20.70px;color:#323130;font-weight:700;left:1630.00px;">Formula</div>
<div class="t" style="top:448.41px;font-size:18.00px;line-height:20.70px;color:#a4262c;font-weight:700;left:1707.01px;">*</div>
<svg style="position:absolute;left:2030.00px;top:446.00px;overflow:visible" width="20" height="20" viewBox="0 0 20 20" fill="none"><path d="M1.5 18.5L18.5 1.5M10.5 1.5h8v8M1.5 10.5v8h8" stroke="#3b3a39" stroke-width="1.6" fill="none"/></svg>
<div style="position:absolute;left:1630.00px;top:483.00px;width:431.00px;height:166.00px;background:#fff;border:1px solid #e1e1e1;box-sizing:border-box;"></div>
<div class="t" style="top:496.68px;font-size:18.80px;line-height:21.62px;color:#252423;left:1638.00px;"><span style="color:#2b7ad6">DATE.SET</span><span style="color:#252423">(</span><span style="color:#2b7ad6">[Quarter Item &gt; Date]</span><span style="color:#252423"> , </span><span style="color:#a31515">'YYYYMMDD</span></div>
<div class="t" style="top:529.68px;font-size:18.80px;line-height:21.62px;color:#252423;left:1638.00px;"><span style="color:#a31515">hh:mm a'</span><span style="color:#252423">)</span></div>
<svg style="position:absolute;left:1631.00px;top:654.00px;overflow:visible" width="16" height="20" viewBox="0 0 16 20" fill="none"><path d="M4.5 13.5C2.5 11.5 1 9.5 1 7a7 7 0 0 1 14 0c0 2.5-1.5 4.5-3.5 6.5V18.5h-7z" stroke="#605e5c" stroke-width="1.4" fill="none"/><path d="M4.5 15.5h7" stroke="#605e5c" stroke-width="1.3"/></svg>
<div class="t" style="top:654.06px;font-size:17.30px;line-height:19.89px;color:#605e5c;left:1657.00px;"><b>Example</b> : <i>[Revenue] + [Sales]</i></div>
<div class="t" style="top:682.33px;font-size:17.00px;line-height:19.55px;color:#605e5c;left:1657.00px;">Use <b>Ctrl + Space</b> to open suggestion, also select any</div>
<div class="t" style="top:708.41px;font-size:18.00px;line-height:20.70px;color:#605e5c;left:1657.00px;">column or cell to insert the reference</div>
<div class="t" style="top:763.41px;font-size:18.00px;line-height:20.70px;color:#323130;font-weight:700;left:1630.00px;">Row aggregation type</div>
<div class="t" style="top:764.41px;font-size:18.00px;line-height:20.70px;color:#a4262c;font-weight:700;left:1824.00px;">*</div>
<div style="position:absolute;left:1630.00px;top:798.00px;width:431.00px;height:52.00px;background:#fff;border:1px solid #e1e1e1;box-sizing:border-box;"></div>
<div class="t" style="top:815.49px;font-size:19.00px;line-height:21.85px;color:#252423;left:1648.00px;">Formula (Sum)</div>
<svg style="position:absolute;left:2024.00px;top:817.00px;overflow:visible" width="22" height="13" viewBox="0 0 22 13" fill="none"><polyline points="1,1 11,11 21,1" stroke="#3b3a39" stroke-width="1.6" fill="none"/></svg>
<div class="t" style="top:882.41px;font-size:18.00px;line-height:20.70px;color:#323130;font-weight:700;left:1630.00px;">Description</div>
<div style="position:absolute;left:1630.00px;top:917.00px;width:431.00px;height:58.00px;background:#fff;border:1px solid #e1e1e1;box-sizing:border-box;"></div>
<div class="t" style="top:927.03px;font-size:19.50px;line-height:22.42px;color:#a19f9d;letter-spacing:0.80px;left:1640.00px;">Briefly describe the formula</div>
<svg style="position:absolute;left:2046.00px;top:960.00px;overflow:visible" width="13" height="13" viewBox="0 0 13 13" fill="none"><path d="M1 12L12 1M6 12l6-6" stroke="#3b3a39" stroke-width="1.3"/></svg>
<div style="position:absolute;left:1788.00px;top:1096.00px;width:132.00px;height:59.00px;background:#f3f2f1;"></div>
<div class="t" style="top:1114.75px;font-size:19.80px;line-height:22.77px;color:#252423;left:1354.00px;width:1000px;text-align:center;">Cancel</div>
<div style="position:absolute;left:1933.00px;top:1096.00px;width:132.00px;height:59.00px;background:#0078d4;"></div>
<div class="t" style="top:1115.03px;font-size:19.50px;line-height:22.42px;color:#ffffff;font-weight:700;left:1499.00px;width:1000px;text-align:center;">Update</div>
</body></html>
